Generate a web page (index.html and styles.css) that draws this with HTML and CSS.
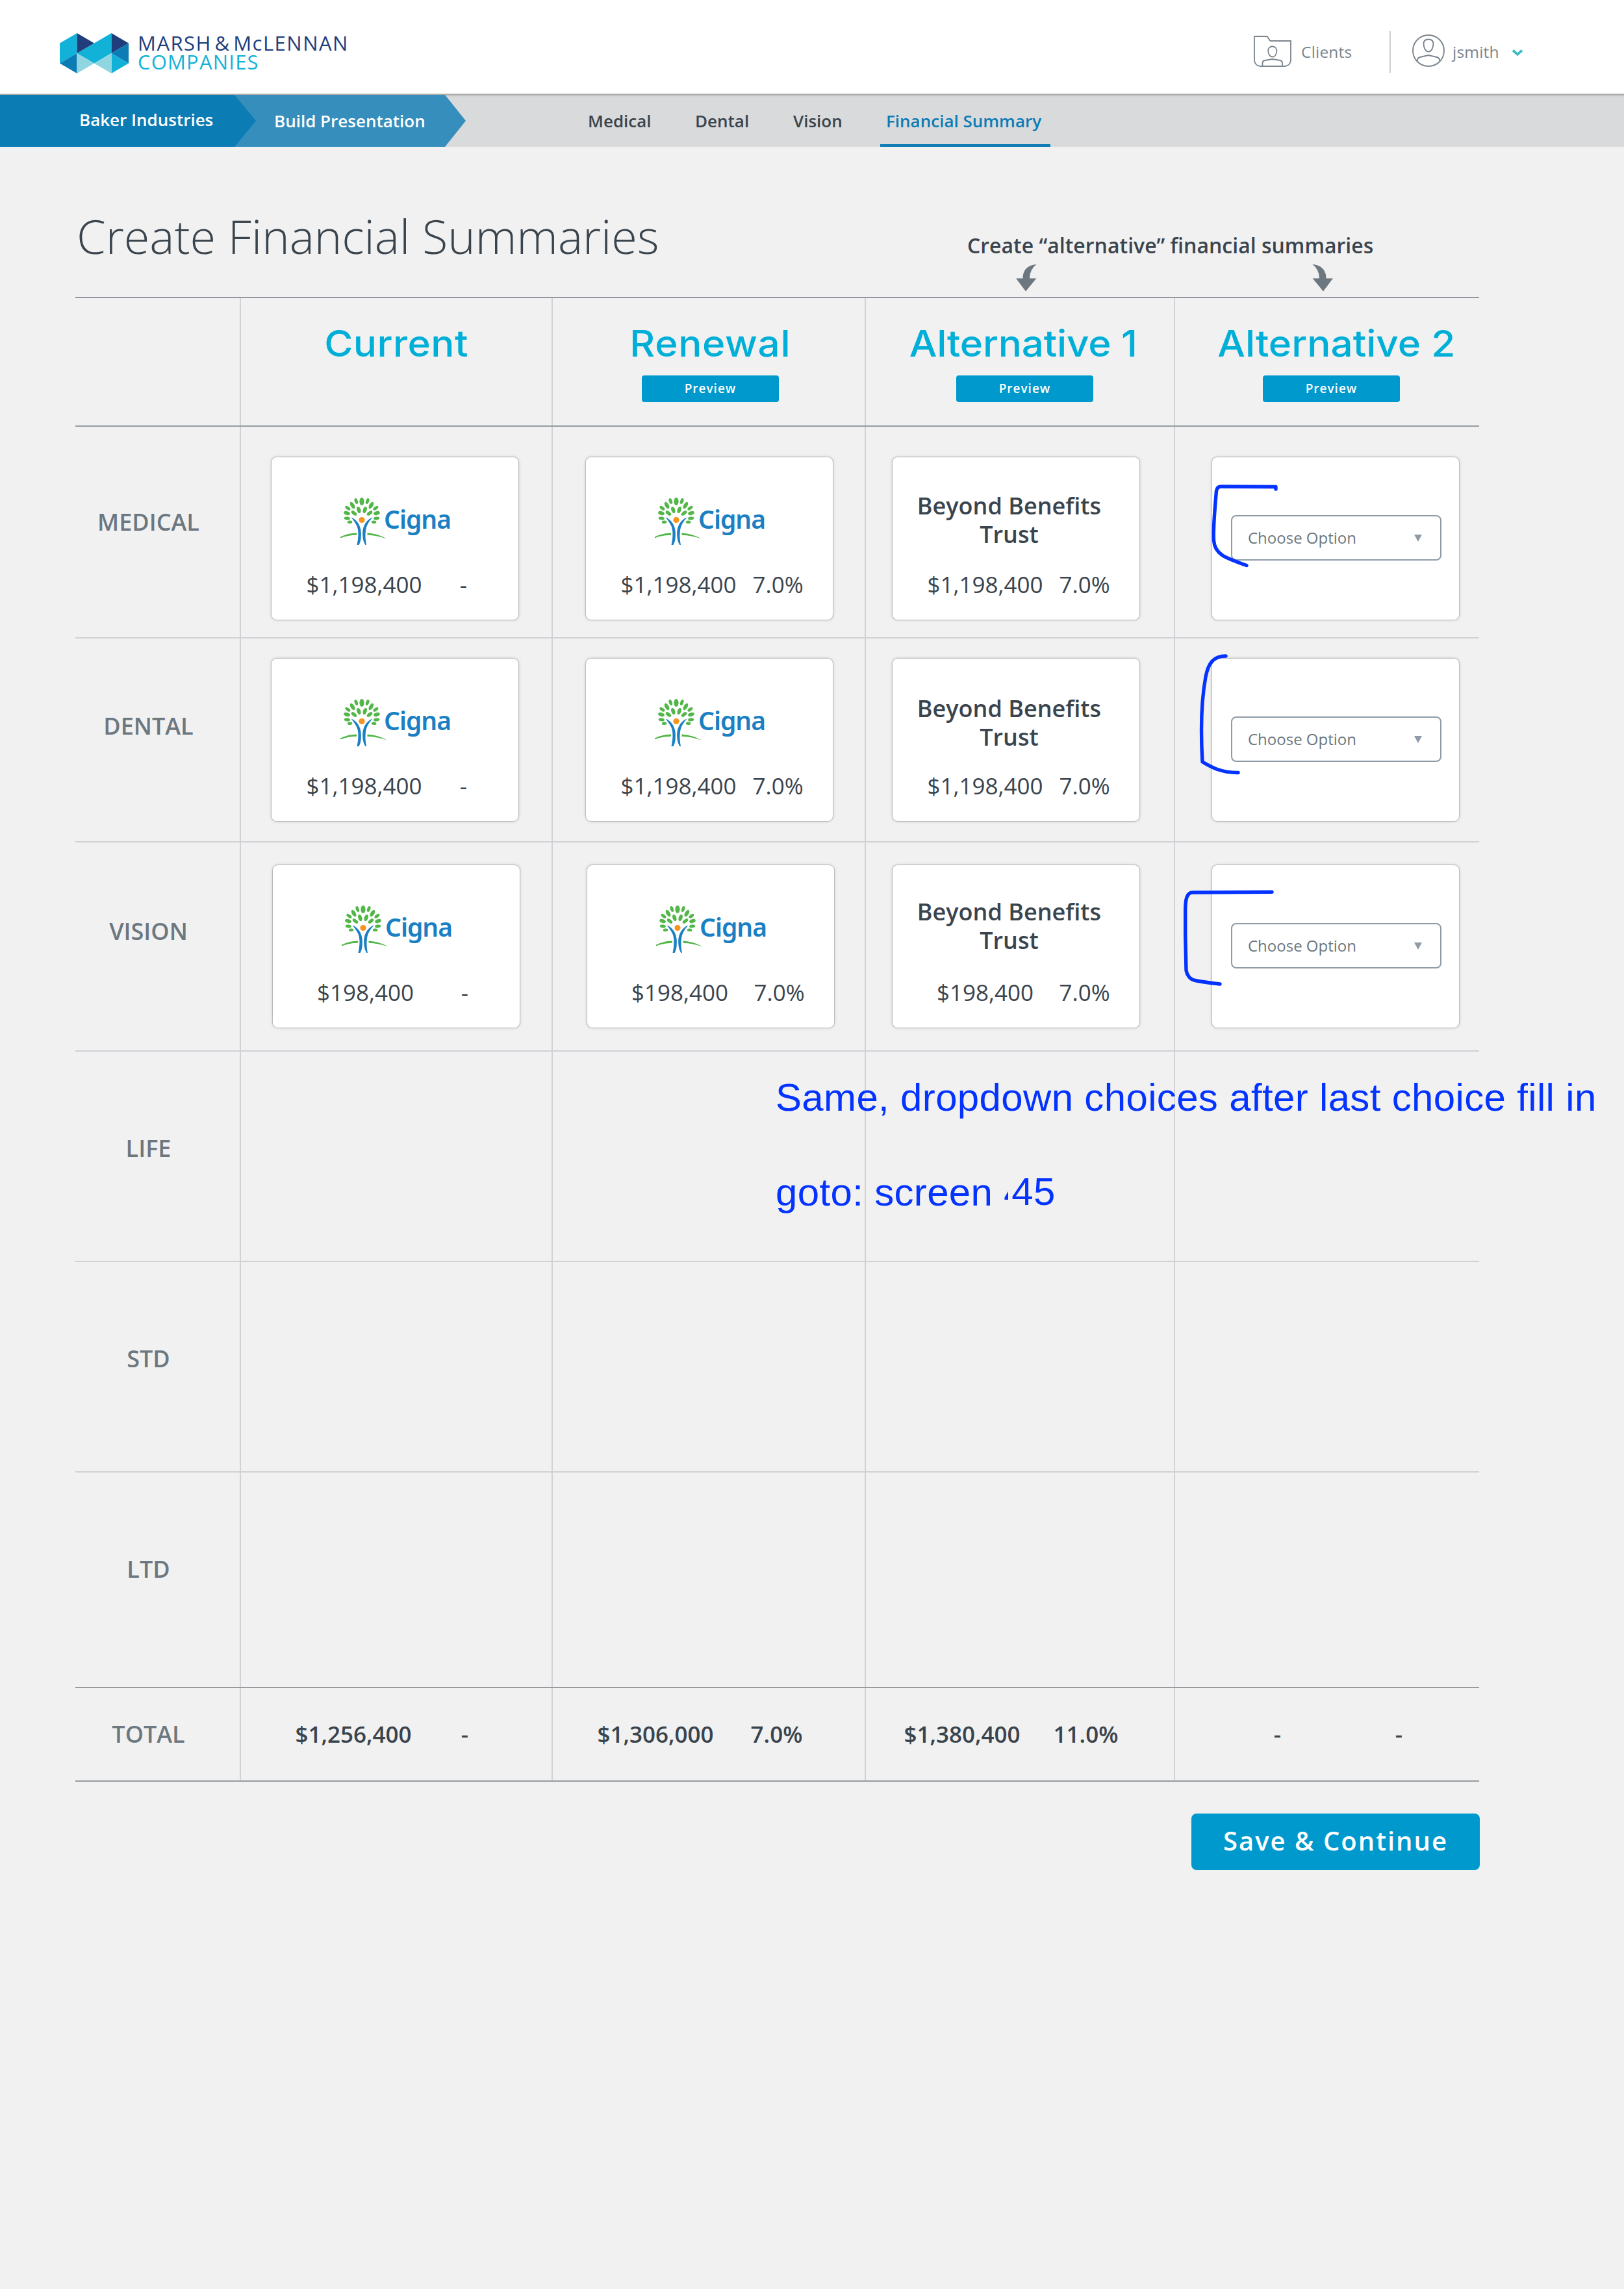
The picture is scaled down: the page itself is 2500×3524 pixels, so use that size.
FILE: index.html
```html
<!DOCTYPE html>
<html lang="en">
<head>
<meta charset="utf-8">
<title>Create Financial Summaries</title>
<link rel="stylesheet" href="styles.css">
</head>
<body>
<svg class="defs" width="0" height="0" aria-hidden="true">
  <symbol id="tree" viewBox="0 0 72 74">
    <g fill="#52b648">
      <ellipse cx="33" cy="6" rx="3.6" ry="6"/>
      <ellipse cx="24.3" cy="5.5" rx="2.5" ry="4.6" transform="rotate(-20 24.3 5.5)"/>
      <ellipse cx="41.7" cy="5.5" rx="2.5" ry="4.6" transform="rotate(20 41.7 5.5)"/>
      <ellipse cx="18.6" cy="12" rx="2.9" ry="5.8" transform="rotate(-30 18.6 12)"/>
      <ellipse cx="47.4" cy="12" rx="2.9" ry="5.8" transform="rotate(30 47.4 12)"/>
      <ellipse cx="11.4" cy="16.3" rx="2.4" ry="4.6" transform="rotate(-54 11.4 16.3)"/>
      <ellipse cx="54.4" cy="16.3" rx="2.4" ry="4.6" transform="rotate(54 54.4 16.3)"/>
      <ellipse cx="28.3" cy="19" rx="2.9" ry="5.2" transform="rotate(-20 28.3 19)"/>
      <ellipse cx="37.7" cy="19" rx="2.9" ry="5.2" transform="rotate(20 37.7 19)"/>
      <ellipse cx="21" cy="24" rx="2.6" ry="5" transform="rotate(-52 21 24)"/>
      <ellipse cx="45" cy="24" rx="2.6" ry="5" transform="rotate(52 45 24)"/>
      <ellipse cx="10" cy="24" rx="2.8" ry="5" transform="rotate(-72 10 24)"/>
      <ellipse cx="56" cy="24" rx="2.8" ry="5" transform="rotate(72 56 24)"/>
      <ellipse cx="10.3" cy="32" rx="2.5" ry="4.6" transform="rotate(-84 10.3 32)"/>
      <ellipse cx="55.7" cy="32" rx="2.5" ry="4.6" transform="rotate(84 55.7 32)"/>
      <ellipse cx="14.6" cy="37.8" rx="2.2" ry="3.8" transform="rotate(-96 14.6 37.8)"/>
      <ellipse cx="51.6" cy="37.8" rx="2.2" ry="3.8" transform="rotate(96 51.6 37.8)"/>
      <path d="M0 60.5Q12 54.5 25 54.5V57.8Q11 57.8 0 62.5Z"/>
      <path d="M41.5 54.5Q58 55.5 71.5 63.5Q57 58.5 41.5 57.8Z"/>
    </g>
    <circle cx="33" cy="34.5" r="4.6" fill="#f7931e"/>
    <path fill="#1a7fc3" d="M16.5 30.5C26 34 31.5 44 31.8 54C32 62 31.5 68 28.5 73H25.5C28 62 28.5 50 25 43C22.5 38 19.5 34 16.5 30.5Z"/>
    <path fill="#1a7fc3" d="M49.5 30.5C40 34 34.5 44 34.2 54C34 62 35.5 69 38.5 73H40C37.8 62 38 50 41 43C43.5 37.5 46.5 34 49.5 30.5Z"/>
  </symbol>
</svg>

<header class="topbar">
  <div class="brand">
    <svg class="brand-mark" viewBox="0 0 106 62">
      <path fill="#12b2d8" d="M0 15.5L26.5 0V31L0 46.5ZM26.5 31L79.5 0V31L53 46.5ZM79.5 31L106 46.5L79.5 62Z"/>
      <path fill="#213e7c" d="M26.5 0L53 15.5L26.5 31ZM79.5 0L106 15.5L79.5 31Z"/>
      <path fill="#0c7cb5" d="M0 46.5L26.5 31V62ZM106 15.5V46.5L79.5 31Z"/>
      <path fill="#8fd6e1" d="M26.5 31L53 46.5L26.5 62ZM79.5 31L53 46.5L79.5 62Z"/>
    </svg>
    <div class="brand-name"><span class="brand-top">MARSH &amp; McLENNAN</span><span class="brand-bottom">COMPANIES</span></div>
  </div>
  <div class="account">
    <svg class="icon-folder" viewBox="0 0 58 48" fill="none" stroke="#7a848d" stroke-width="1.8">
      <path d="M1 1H20.5L25.5 8H57V38Q56 46 48 47H10Q2 46 1 38Z"/>
      <path d="M28.7 16.5C33 16.5 35.5 19.5 35.3 23.5C35 28.5 32.5 32.5 28.7 32.5C25 32.5 22.5 28.5 22.2 23.5C22 19.5 24.5 16.5 28.7 16.5Z"/>
      <path d="M13.5 46V41.5Q14 38.5 17 38L28.7 36L41 38Q43.5 38.5 44 41.5V46"/>
    </svg>
    <span class="clients">Clients</span>
    <i class="divider"></i>
    <svg class="icon-user" viewBox="0 0 50 50" fill="none" stroke="#7a848d" stroke-width="1.9">
      <circle cx="25" cy="25" r="24"/>
      <path d="M25 7.5C29.5 7.5 32.5 10 32.5 14.5C32.2 21 29.5 26.5 25 26.5C20.5 26.5 17.8 21 17.5 14.5C17.5 10 20.5 7.5 25 7.5Z"/>
      <path d="M7.5 41.5Q7.5 36.5 12 35L25 32L38 35Q42.5 36.5 42.5 41.5"/>
    </svg>
    <span class="user">jsmith</span>
    <svg class="icon-chevron" viewBox="0 0 18 12"><path d="M2 2.5L9 8.8L16 2.5" fill="none" stroke="#3bbdc4" stroke-width="3.8"/></svg>
  </div>
</header>

<nav class="subnav">
  <a class="crumb crumb-1">Baker Industries</a>
  <a class="crumb crumb-2">Build Presentation</a>
  <div class="tabs">
    <a class="tab tab-medical">Medical</a>
    <a class="tab tab-dental">Dental</a>
    <a class="tab tab-vision">Vision</a>
    <a class="tab tab-active">Financial Summary</a>
  </div>
</nav>

<main class="page">
  <div class="heading">
    <h1>Create Financial Summaries</h1>
    <div class="hint">
      <p>Create “alternative” financial summaries</p>
      <div class="arrows">
        <svg viewBox="0 0 32 42"><path fill="#6c7780" d="M31.5 0Q10.5 2 10.5 21.5H0L15 41.5L31.5 21.5H21Q21 8 31.5 0Z"/></svg>
        <svg viewBox="0 0 32 42"><path fill="#6c7780" d="M.5 0Q21.5 2 21.5 21.5H32L17 41.5L.5 21.5H11Q11 8 .5 0Z"/></svg>
      </div>
    </div>
  </div>

  <section class="table">
    <div class="row row-head">
      <div class="cell"></div>
      <div class="cell col-1"><h2><span>Current</span></h2></div>
      <div class="cell col-2"><h2><span>Renewal</span></h2><button class="preview">Preview</button></div>
      <div class="cell col-3"><h2><span>Alternative 1</span></h2><button class="preview">Preview</button></div>
      <div class="cell col-4"><h2><span>Alternative 2</span></h2><button class="preview">Preview</button></div>
    </div>

    <div class="row row-medical">
      <div class="cell label">MEDICAL</div>
      <div class="cell col-1"><div class="card"><div class="cigna"><svg><use href="#tree"/></svg><span>Cigna</span></div><div class="amounts"><span>$1,198,400</span><span>-</span></div></div></div>
      <div class="cell col-2"><div class="card"><div class="cigna"><svg><use href="#tree"/></svg><span>Cigna</span></div><div class="amounts"><span>$1,198,400</span><span>7.0%</span></div></div></div>
      <div class="cell col-3"><div class="card"><div class="trust">Beyond Benefits<br>Trust</div><div class="amounts"><span>$1,198,400</span><span>7.0%</span></div></div></div>
      <div class="cell col-4"><div class="card"><div class="select"><span>Choose Option</span><i class="caret"></i></div></div></div>
    </div>

    <div class="row row-dental">
      <div class="cell label">DENTAL</div>
      <div class="cell col-1"><div class="card"><div class="cigna"><svg><use href="#tree"/></svg><span>Cigna</span></div><div class="amounts"><span>$1,198,400</span><span>-</span></div></div></div>
      <div class="cell col-2"><div class="card"><div class="cigna"><svg><use href="#tree"/></svg><span>Cigna</span></div><div class="amounts"><span>$1,198,400</span><span>7.0%</span></div></div></div>
      <div class="cell col-3"><div class="card"><div class="trust">Beyond Benefits<br>Trust</div><div class="amounts"><span>$1,198,400</span><span>7.0%</span></div></div></div>
      <div class="cell col-4"><div class="card"><div class="select"><span>Choose Option</span><i class="caret"></i></div></div></div>
    </div>

    <div class="row row-vision">
      <div class="cell label">VISION</div>
      <div class="cell col-1"><div class="card"><div class="cigna"><svg><use href="#tree"/></svg><span>Cigna</span></div><div class="amounts"><span>$198,400</span><span>-</span></div></div></div>
      <div class="cell col-2"><div class="card"><div class="cigna"><svg><use href="#tree"/></svg><span>Cigna</span></div><div class="amounts"><span>$198,400</span><span>7.0%</span></div></div></div>
      <div class="cell col-3"><div class="card"><div class="trust">Beyond Benefits<br>Trust</div><div class="amounts"><span>$198,400</span><span>7.0%</span></div></div></div>
      <div class="cell col-4"><div class="card"><div class="select"><span>Choose Option</span><i class="caret"></i></div></div></div>
    </div>

    <div class="row row-life"><div class="cell label">LIFE</div><div class="cell"></div><div class="cell"></div><div class="cell"></div><div class="cell"></div></div>
    <div class="row row-std"><div class="cell label">STD</div><div class="cell"></div><div class="cell"></div><div class="cell"></div><div class="cell"></div></div>
    <div class="row row-ltd"><div class="cell label">LTD</div><div class="cell"></div><div class="cell"></div><div class="cell"></div><div class="cell"></div></div>

    <div class="row row-total">
      <div class="cell label">TOTAL</div>
      <div class="cell sum sum-1"><span>$1,256,400</span><span>-</span></div>
      <div class="cell sum sum-2"><span>$1,306,000</span><span>7.0%</span></div>
      <div class="cell sum sum-3"><span>$1,380,400</span><span>11.0%</span></div>
      <div class="cell sum sum-4"><span>-</span><span>-</span></div>
    </div>
  </section>

  <div class="actions"><button class="save">Save &amp; Continue</button></div>
</main>

<svg class="markup" viewBox="0 0 2500 3524" fill="none" stroke="#0433ff" stroke-width="5.4" stroke-linecap="round" stroke-linejoin="round">
  <path d="M1964 753V749.5L1880 749Q1873.5 749 1872.5 756C1870.5 778 1867.5 815 1868.5 832C1870 853 1884 858 1919 870.5"/>
  <path d="M1887 1010C1868 1010 1860 1021 1856 1042C1849 1080 1848.5 1130 1851 1173C1862 1179 1878 1190 1906 1189.5"/>
  <path d="M1958 1373.3L1836 1374C1827 1374 1825 1384 1824.7 1400V1440L1826 1494C1827 1500 1831 1508 1840 1509.5C1852 1512 1865 1513.5 1878 1515"/>
  <path d="M1552 1834V1847H1546.5V1843.5Z" fill="#0433ff" stroke="none"/>
</svg>
<div class="note note-1">Same, dropdown choices after last choice fill in</div>
<div class="note note-2"><span>goto: screen</span><span class="num">45</span></div>
</body>
</html>
```
FILE: styles.css
```css
* { box-sizing: border-box; }
html, body { margin: 0; }
body {
  position: relative;
  width: 2500px;
  height: 3524px;
  overflow: hidden;
  background: #f1f1f1;
  color: #3a444d;
  font-family: "Open Sans", "Noto Sans", sans-serif;
}
h1, h2, p { margin: 0; font-weight: inherit; }
button { border: 0; padding: 0; font: inherit; color: #fff; background: #0099cd; }
.defs { position: absolute; }

.topbar { display: flex; justify-content: space-between; height: 144px; background: #fff; }
.brand { display: flex; padding: 51px 0 0 92px; }
.brand-mark { width: 106px; height: 62px; }
.brand-name { display: flex; flex-direction: column; align-items: flex-start; margin: 1px 0 0 14px; font-size: 31px; font-weight: 500; line-height: 29px; white-space: nowrap; }
.brand-top { color: #213e7c; letter-spacing: 1.5px; word-spacing: -5px; }
.brand-bottom { color: #12b2d8; letter-spacing: 1.2px; }
.account { display: flex; align-items: flex-start; width: 570px; color: #7a848d; font-size: 24.5px; font-weight: 500; line-height: 34px; letter-spacing: .2px; }
.icon-folder { flex: none; width: 58px; height: 48px; margin-top: 55px; }
.clients { margin: 63px 0 0 15px; width: 136px; }
.divider { width: 2px; height: 64px; margin: 48px 33px 0 0; background: #cfcfcd; }
.icon-user { flex: none; width: 50px; height: 50px; margin-top: 53px; }
.user { margin: 63px 0 0 12px; width: 91px; }
.icon-chevron { width: 18px; height: 12px; margin-top: 75px; }

.subnav {
  display: flex;
  height: 82px;
  padding-top: 2px;
  background: linear-gradient(#c9c9c9 0 1px, #acacae 1px 2px, #c3c4c5 2px 4px, #d3d4d5 4px 6px, #d9dadc 6px);
  font-size: 26px;
  font-weight: 600;
  line-height: 36px;
}
.crumb { height: 80px; color: #fff; }
.crumb-1 { width: 394px; padding: 20px 0 0 122px; background: #0c7cb5; clip-path: polygon(0 0, 361px 0, 100% 50%, 361px 100%, 0 100%); z-index: 1; }
.crumb-2 { width: 357px; margin-left: -34px; padding: 22px 0 0 62px; background: #358ebc; clip-path: polygon(0 0, 325px 0, 100% 50%, 325px 100%, 0 100%); }
.tabs { display: flex; margin-left: 188px; }
.tab { padding-top: 22px; height: 80px; }
.tab-medical { width: 165px; }
.tab-dental { width: 151px; }
.tab-vision { width: 134px; }
.tab-active { width: 262px; padding-left: 9px; border-bottom: 4px solid #0c7cb5; color: #0c7cb5; }

.heading { display: flex; height: 232px; }
h1 { width: 1373px; padding: 87px 0 0 118px; font-size: 72px; font-weight: 300; line-height: 100px; }
.hint { font-size: 32px; font-weight: 600; line-height: 44px; }
.hint p { padding: 130px 0 0 116px; }
.arrows { display: flex; gap: 424px; padding: 7px 0 0 191px; }
.arrows svg { width: 32px; height: 42px; }

.table { width: 2161px; margin-left: 116px; border-bottom: 2px solid #969ba0; }
.row { display: grid; grid-template-columns: 253px 480px 482px 476px 470px; border-top: 2px solid #d1d1d6; }
.row .cell + .cell { border-left: 2px solid #d1d1d6; }
.row-head { height: 197px; border-top: 1px solid #36424b; }
.row-medical { height: 326px; border-color: #969ba0; }
.row-dental { height: 314px; }
.row-vision { height: 322px; }
.row-life, .row-std { height: 324px; }
.row-ltd { height: 332px; }
.row-total { height: 144px; border-color: #969ba0; }

.label { padding-right: 28px; text-align: center; color: #6c7780; font-size: 36px; font-weight: 600; line-height: 48px; }
.row-medical .label { padding-top: 123px; }
.row-dental .label { padding-top: 111px; }
.row-vision .label { padding-top: 113px; }
.row-life .label, .row-std .label, .row-ltd .label { padding-top: 125px; }
.row-total .label { padding-top: 47px; }

h2 { padding-top: 34px; color: #00afd8; font: 500 56px/72px Inter, sans-serif; text-align: center; white-space: nowrap; }
h2 span { display: inline-block; transform: scaleX(1.075); }
.row-head .col-1 h2 { letter-spacing: .4px; }
.row-head .col-2 h2 { padding-left: 4px; letter-spacing: .6px; }
.row-head .col-3 h2 { padding-left: 11px; letter-spacing: -.2px; }
.row-head .col-4 h2 { padding-left: 28px; }
.preview { display: block; width: 211px; height: 41px; margin-top: 13px; padding-bottom: 2px; border-radius: 4px; font-size: 19px; font-weight: 600; letter-spacing: 1px; text-align: center; }
.col-2 .preview { margin-left: 137px; }
.col-3 .preview { margin-left: 139px; }
.col-4 .preview { margin-left: 135px; }

.card { width: 380px; height: 250px; margin-top: 47px; border-radius: 8px; background: #fff; box-shadow: 0 0 1px 1px rgba(0,0,0,.18), 0 0 5px 1px rgba(0,0,0,.12); }
.row-dental .card { margin-top: 31px; }
.row-vision .card { margin-top: 35px; }
.col-1 .card { margin-left: 47px; }
.col-2 .card { margin-left: 51px; }
.row-vision .col-1 .card { margin-left: 49px; }
.row-vision .col-2 .card { margin-left: 53px; }
.col-3 .card { margin-left: 41px; }
.col-4 .card { margin-left: 57px; }
.cigna { display: flex; height: 174px; padding: 62px 0 0 106px; color: #1a7fc3; font: 600 39px/50px "Noto Sans", sans-serif; letter-spacing: -1px; }
.cigna svg { width: 72px; height: 74px; }
.cigna span { margin: 8px 0 0 -5px; }
.trust { height: 174px; padding: 53px 21px 0 0; font-size: 36px; font-weight: 600; line-height: 44px; text-align: center; white-space: nowrap; }
.row-dental .trust { padding-top: 55px; }
.row-vision .trust { padding-top: 50px; }
.amounts { display: grid; grid-template-columns: 200px 106px; padding-left: 42.5px; font-size: 35px; line-height: 44px; text-align: center; }
.select { position: relative; top: 89px; display: flex; width: 324px; height: 70px; margin-left: 29px; padding-left: 24px; border: 2px solid #8f9ba6; border-radius: 8px; color: #6c7780; font-size: 24px; line-height: 66px; }
.select span { width: 256px; }
.caret { width: 12px; height: 11px; margin-top: 28px; background: #8f9ba6; clip-path: polygon(0 0, 100% 0, 50% 100%); }

.sum { display: grid; padding-top: 47px; font-size: 35px; font-weight: 600; line-height: 48px; text-align: center; }
.sum-1 { grid-template-columns: 200px 143px; padding-left: 73px; }
.sum-2 { grid-template-columns: 200px 173px; padding-left: 58px; }
.sum-3 { grid-template-columns: 200px 181px; padding-left: 48px; }
.sum-4 { grid-template-columns: 187px 187px; padding-left: 64px; }

.actions { display: flex; margin: 49px 0 0 1834px; }
.save { width: 444px; height: 87px; padding-bottom: 5px; border-radius: 8px; font-size: 40px; font-weight: 600; letter-spacing: 2px; }

.markup { position: absolute; left: 0; top: 0; width: 2500px; height: 3524px; }
.note { position: absolute; left: 1194px; color: #0433ff; font: 60px/70px "Liberation Sans", sans-serif; letter-spacing: .34px; white-space: nowrap; }
.note-1 { top: 1655px; }
.note-2 { top: 1801px; display: flex; }
.note-2 .num { margin: -1px 0 0 29px; }
```
